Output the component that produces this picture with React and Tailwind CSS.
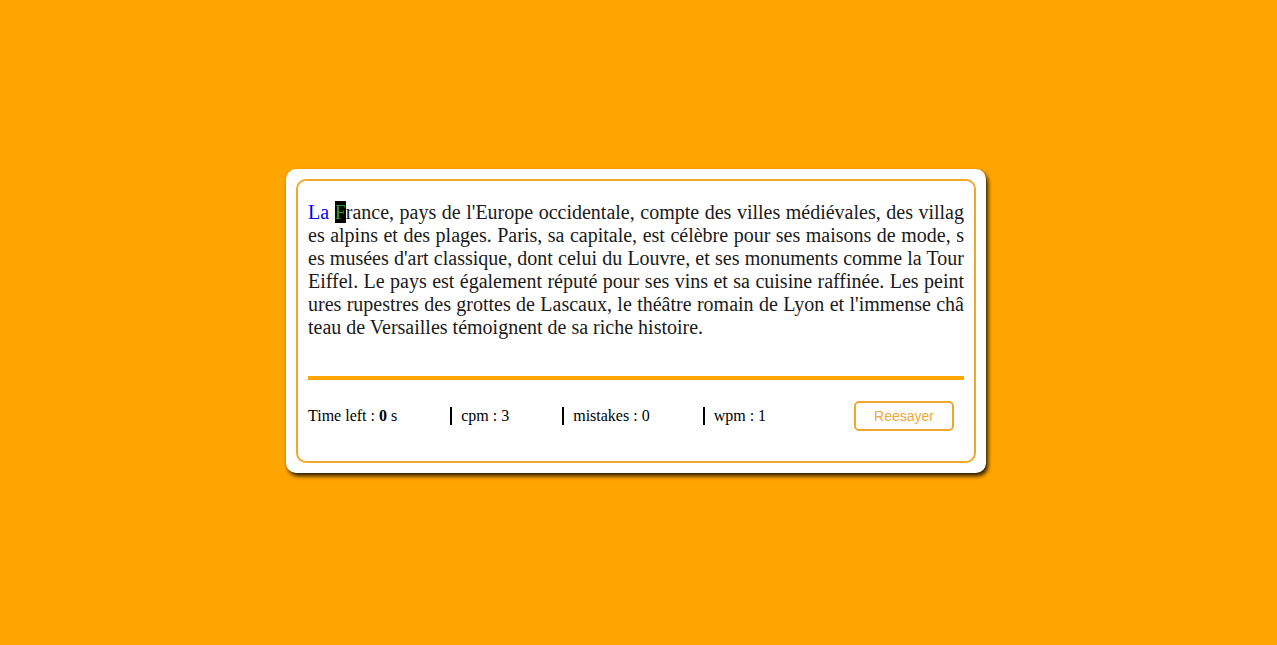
import React from "react";

const rest =
    "rance, pays de l'Europe occidentale, compte des villes médiévales, des villages alpins et des plages. Paris, sa capitale, est célèbre pour ses maisons de mode, ses musées d'art classique, dont celui du Louvre, et ses monuments comme la Tour Eiffel. Le pays est également réputé pour ses vins et sa cuisine raffinée. Les peintures rupestres des grottes de Lascaux, le théâtre romain de Lyon et l'immense château de Versailles témoignent de sa riche histoire.";

function Stat({ children, first = false }) {
    return (
        <div
            className={
                first
                    ? "pr-[53px] leading-[18px]"
                    : "border-l-2 border-black pl-[9px] pr-[53px] leading-[18px]"
            }
        >
            {children}
        </div>
    );
}

export default function App() {
    return (
        <div className="min-h-screen w-full bg-[#ffa500] flex items-center justify-center pr-[5px] pb-[3px]">
            <div className="w-[700px] bg-white rounded-[10px] p-[10px] shadow-[2px_3px_4px_rgba(0,0,0,0.85)]">
                <div className="border-2 border-[#f0a82a] rounded-[10px] px-[10px] pt-[20px] pb-[30px] font-['Liberation_Serif',serif]">
                    {/* texte à taper */}
                    <p className="text-[20px] leading-[23px] text-[#1a1a1a] break-all text-justify">
                        <span className="text-[#0000ff]">La </span>
                        <span className="bg-black text-[#339933]">F</span>
                        {rest}
                    </p>

                    <div className="mt-[37px] h-[4px] bg-[#ffa500]" />

                    <div className="mt-[21px] flex items-center text-[16px] text-black">
                        <Stat first>
                            Time left : <b>0</b> s
                        </Stat>
                        <Stat>cpm : 3</Stat>
                        <Stat>mistakes : 0</Stat>
                        <Stat>wpm : 1</Stat>
                        <button className="ml-auto mr-[10px] w-[100px] h-[30px] border-2 border-[#f0a82a] rounded-[5px] bg-white text-[#f0a83a] text-[14px] font-['Liberation_Sans',Arial,sans-serif]">
                            Reesayer
                        </button>
                    </div>
                </div>
            </div>
        </div>
    );
}
